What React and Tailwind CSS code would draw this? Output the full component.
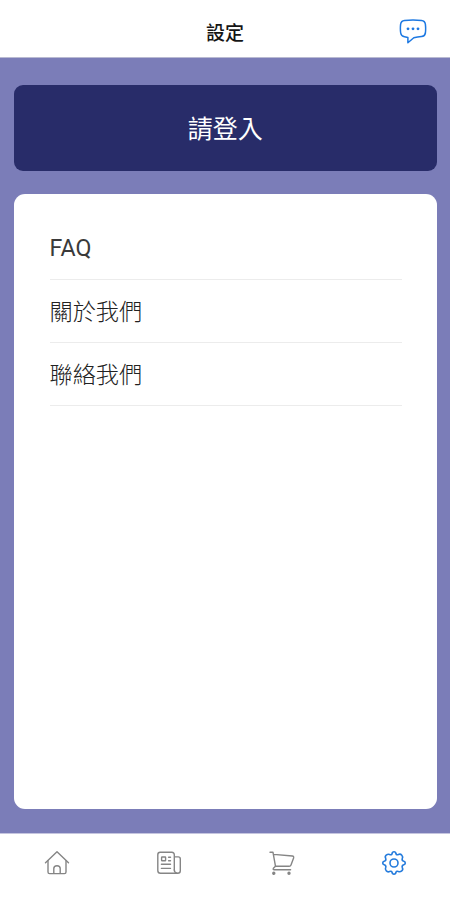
const rows = ["FAQ", "關於我們", "聯絡我們"];

function ChatIcon() {
  return (
    <svg width="28" height="26" viewBox="0 0 28 26" fill="none" stroke="#1c78e2" strokeWidth="1.5" strokeLinejoin="round">
      <path d="M5.5 1.5Q14 .6 22.5 1.5Q26 1.9 26.4 5.4Q26.9 10 26.4 14Q25.8 17.3 22.5 17.6Q18.5 18 14.8 18.7L8.9 23.7V18.5L5.5 17.8Q2.2 17.3 1.7 14Q1.1 10 1.6 5.4Q2 1.9 5.5 1.5Z" />
      <g fill="#1c78e2" stroke="none">
        <circle cx="9" cy="9.8" r="1.4" />
        <circle cx="14" cy="9.8" r="1.4" />
        <circle cx="19" cy="9.8" r="1.4" />
      </g>
    </svg>
  );
}

function HomeIcon() {
  return (
    <svg width="26" height="26" viewBox="0 0 26 26" fill="none" stroke="#858585" strokeWidth="1.4" strokeLinecap="round" strokeLinejoin="round">
      <path d="M1.5 12.7L13 1.7L24.5 12.7" />
      <path d="M4 10.6V22Q4 23.6 5.6 23.6H20.4Q22 23.6 22 22V10.6" />
      <path d="M9.8 23.3V18.6Q9.8 15.8 13 15.8Q16.2 15.8 16.2 18.6V23.3" />
    </svg>
  );
}

function NewsIcon() {
  return (
    <svg width="26" height="26" viewBox="0 0 26 26" fill="none" stroke="#858585" strokeWidth="1.4" strokeLinecap="round" strokeLinejoin="round">
      <path d="M18.3 20V4.8Q18.3 2.3 15.8 2.3H4.2Q1.8 2.3 1.8 4.8V20.5Q1.8 23.3 4.5 23.3H21.8Q24.3 23.3 24.3 20.8V9Q24.3 6.9 22.2 6.9H18.3" />
      <path d="M18.3 20Q18.4 22.7 21 23.2" />
      <path d="M5.4 14.3H14.5M5.4 18.4H14.5M12.6 7.2H14.5M12.6 10.7H14.5" />
      <rect x="5.6" y="7" width="4" height="3.8" rx=".5" />
    </svg>
  );
}

function CartIcon() {
  return (
    <svg width="26" height="26" viewBox="0 0 26 26" fill="none" stroke="#858585" strokeWidth="1.4" strokeLinecap="round" strokeLinejoin="round">
      <path d="M1 2.3H4L6.5 16.3H20.2Q21.5 16.3 22 15L24.6 8Q25 6.2 23.4 6L4.7 4.4" />
      <path d="M6.5 16.3L4.4 18.3Q3.7 19.7 5.2 19.7H21.6" />
      <circle cx="4.8" cy="23.3" r="1" fill="#858585" />
      <circle cx="20" cy="23.3" r="1" fill="#858585" />
    </svg>
  );
}

function GearIcon() {
  return (
    <svg width="26" height="26" viewBox="0 0 26 26" fill="none" stroke="#247bdc" strokeWidth="1.6" strokeLinejoin="round">
      <path d="M11 3.8Q11.3 1.7 13 1.7T15 3.8Q15.7 5.3 17.4 4.5Q19.4 3.6 20.8 5.2T21.3 8.4Q20.7 10.3 22.3 11Q24.3 11.5 24.3 13T22.3 15Q20.7 15.7 21.3 17.6Q22.4 19.5 20.8 20.8T17.4 21.5Q15.7 20.7 15 22.2Q14.7 24.3 13 24.3T11 22.2Q10.3 20.7 8.6 21.5Q6.6 22.4 5.2 20.8T4.7 17.6Q5.3 15.7 3.7 15Q1.7 14.5 1.7 13T3.7 11Q5.3 10.3 4.7 8.4Q3.6 6.5 5.2 5.2T8.6 4.5Q10.3 5.3 11 3.8Z" />
      <circle cx="13" cy="13" r="4" />
    </svg>
  );
}

const tabs = [HomeIcon, NewsIcon, CartIcon, GearIcon];

export default function App() {
  return (
    <div className="flex h-[900px] w-[450px] flex-col overflow-hidden bg-white font-['Noto_Sans_CJK_TC',sans-serif]">
      <header className="grid h-[58px] shrink-0 grid-cols-[1fr_auto_1fr] items-center border-b border-[#b9bad2] pt-[6px]">
        <h1 className="col-start-2 text-[19px] leading-[28px] font-medium text-[#151515]">設定</h1>
        <button className="mr-[23px] justify-self-end" aria-label="Chat">
          <ChatIcon />
        </button>
      </header>
      <main className="flex min-h-0 flex-1 flex-col gap-[23px] bg-[#7b7db8] pt-[27px] pr-[13.5px] pb-[24px] pl-[14px]">
        <button className="flex h-[86px] shrink-0 items-center justify-center rounded-[9px] bg-[#282c69] text-[25px] text-white">
          請登入
        </button>
        <section className="flex-1 rounded-[11px] bg-white pt-[23px] pr-[34.5px] pl-[35.5px]">
          <ul>
            {rows.map((row) => (
              <li key={row} className="flex h-[63px] items-center border-b border-[#ececec] pb-[2px] text-[23.2px] font-light text-[#222]">
                {row === "FAQ" ? <span className="pt-[3px] font-[Roboto,sans-serif] text-[23.2px] font-normal text-[#3a3a3a]">{row}</span> : row}
              </li>
            ))}
          </ul>
        </section>
      </main>
      <nav className="grid h-[67px] shrink-0 grid-cols-4 border-t border-[#c5c5df] bg-white pt-[16px] pl-px">
        {tabs.map((Icon, i) => (
          <button key={i} className="flex items-start justify-center">
            <Icon />
          </button>
        ))}
      </nav>
    </div>
  );
}
